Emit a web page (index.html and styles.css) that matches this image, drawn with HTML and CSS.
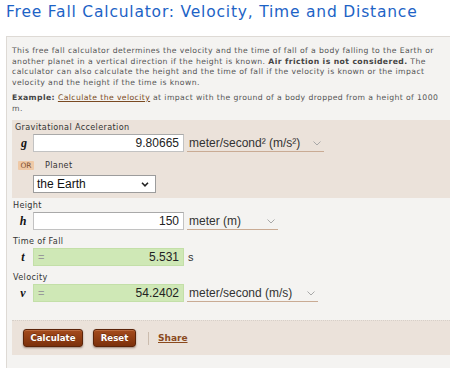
FILE: index.html
```html
<!DOCTYPE html>
<html lang="en">
<head>
<meta charset="utf-8">
<title>Free Fall Calculator</title>
<link rel="stylesheet" href="styles.css">
</head>
<body>
<h1 class="title">Free Fall Calculator: Velocity, Time and Distance</h1>
<div class="box">
  <p class="intro">This free fall calculator determines the velocity and the time of fall of a body falling to the Earth or another planet in a vertical direction if the height is known. <b>Air friction is not considered.</b> The calculator can also calculate the height and the time of fall if the velocity is known or the impact velocity and the height if the time is known.</p>
  <p class="intro example"><b>Example:</b> <a href="#">Calculate the velocity</a> at impact with the ground of a body dropped from a height of 1000 m.</p>

  <div class="panel">
    <div class="label">Gravitational Acceleration</div>
    <div class="row">
      <span class="var">g</span>
      <span class="field">9.80665</span>
      <span class="unit unit-g">meter/second² (m/s²)<svg class="chev" viewBox="0 0 8 5" width="8" height="5"><path d="M0.5 0.5 L4 4 L7.5 0.5" fill="none" stroke="#a8a8a8" stroke-width="1"/></svg></span>
    </div>
    <div class="or-row">
      <span class="or">OR</span>
      <span class="planet-label">Planet</span>
    </div>
    <div class="row">
      <span class="var"></span>
      <span class="planet">the Earth<svg class="chev-dark" viewBox="0 0 8 5" width="8" height="5"><path d="M1 0.8 L4 3.8 L7 0.8" fill="none" stroke="#222" stroke-width="1.6"/></svg></span>
    </div>
  </div>

  <div class="group">
    <div class="label">Height</div>
    <div class="row">
      <span class="var">h</span>
      <span class="field">150</span>
      <span class="unit unit-h">meter (m)<svg class="chev" viewBox="0 0 8 5" width="8" height="5"><path d="M0.5 0.5 L4 4 L7.5 0.5" fill="none" stroke="#a8a8a8" stroke-width="1"/></svg></span>
    </div>
    <div class="label">Time of Fall</div>
    <div class="row">
      <span class="var">t</span>
      <span class="field result"><span class="eq">=</span>5.531</span>
      <span class="plain-unit">s</span>
    </div>
    <div class="label">Velocity</div>
    <div class="row">
      <span class="var">v</span>
      <span class="field result"><span class="eq">=</span>54.2402</span>
      <span class="unit unit-v">meter/second (m/s)<svg class="chev" viewBox="0 0 8 5" width="8" height="5"><path d="M0.5 0.5 L4 4 L7.5 0.5" fill="none" stroke="#a8a8a8" stroke-width="1"/></svg></span>
    </div>
  </div>

  <div class="actions">
    <button class="btn btn-calc">Calculate</button>
    <button class="btn btn-reset">Reset</button>
    <span class="sep"></span>
    <a class="share" href="#">Share</a>
  </div>
</div>
</body>
</html>
```
FILE: styles.css
```css
html, body {
  margin: 0;
  padding: 0;
  background: #fff;
  overflow: hidden;
}
body {
  width: 450px;
  height: 368px;
  font-family: "DejaVu Sans", Verdana, sans-serif;
}
.title {
  margin: 0;
  padding: 1px 0 0 6px;
  height: 36px;
  box-sizing: border-box;
  font-size: 15.5px;
  letter-spacing: 0.8px;
  line-height: 22px;
  font-weight: normal;
  color: #1d63c6;
  white-space: nowrap;
}
.box {
  margin-left: 6px;
  margin-right: -20px;
  border: 1px solid #dedad5;
  border-right: none;
  background: #f4f3f1;
  padding: 9px 0 30px 5px;
}
.intro {
  margin: 0 30px 0 0;
  font-size: 7.7px;
  letter-spacing: 0.4px;
  line-height: 10.5px;
  color: #555;
}
.intro b { color: #444; }
.example {
  margin-top: 5px;
  margin-bottom: 6px;
}
.example a {
  color: #7a4a22;
  text-decoration: underline;
}
.panel {
  background: #ebe2da;
  padding: 2px 0 5px 3px;
}
.label {
  font-size: 8.1px;
  letter-spacing: 0.35px;
  line-height: 10px;
  color: #333;
  height: 10px;
}
.row {
  display: flex;
  align-items: center;
  margin-top: 2px;
  height: 18px;
}
.var {
  width: 20px;
  flex: none;
  text-align: center;
  font-family: "Liberation Serif", "Times New Roman", serif;
  font-weight: bold;
  font-style: italic;
  font-size: 12px;
  color: #111;
}
.panel .var { width: 18px; }
.field {
  box-sizing: border-box;
  width: 151px;
  height: 18px;
  flex: none;
  display: flex;
  align-items: center;
  justify-content: flex-end;
  padding: 0 4px;
  background: #fff;
  border: 1px solid #c2c2c2;
  border-top-color: #a9a9a9;
  font-family: "Liberation Sans", Arial, sans-serif;
  font-size: 12px;
  color: #222;
}
.field.result {
  background: #cfe8b6;
  border-color: #c3dfa8;
  justify-content: space-between;
}
.eq {
  color: #999;
  font-size: 11px;
}
.unit {
  box-sizing: border-box;
  margin-left: 3px;
  height: 18px;
  display: flex;
  align-items: center;
  justify-content: space-between;
  padding: 0 3px 0 2px;
  border-bottom: 1px solid #c9ab94;
  font-family: "Liberation Sans", Arial, sans-serif;
  font-size: 12px;
  color: #333;
}
.unit-g { width: 137px; }
.unit-h { width: 91px; }
.unit-v { width: 131px; }
.chev { flex: none; margin-top: 2px; }
.plain-unit {
  margin-left: 4px;
  font-family: "Liberation Sans", Arial, sans-serif;
  font-size: 11px;
  color: #333;
}
.or-row {
  display: flex;
  align-items: center;
  height: 12px;
  margin-top: 7px;
  padding-left: 3px;
}
.or {
  background: #efc9a6;
  color: #7f5030;
  font-size: 7.5px;
  line-height: 9px;
  padding: 0 1px;
  width: 16px;
  box-sizing: border-box;
  text-align: center;
  border-radius: 1px;
}
.planet-label {
  margin-left: 11px;
  font-size: 8.1px;
  letter-spacing: 0.35px;
  color: #333;
}
.panel .row + .or-row + .row { margin-top: 4px; }
.planet {
  box-sizing: border-box;
  width: 123px;
  height: 18px;
  display: flex;
  align-items: center;
  justify-content: space-between;
  padding: 0 6px 0 3px;
  background: #fff;
  border: 1px solid #9c9c9c;
  font-family: "Liberation Sans", Arial, sans-serif;
  font-size: 12px;
  color: #111;
}
.group {
  padding-top: 2px;
  padding-left: 1px;
}
.group .label { margin-top: 6px; }
.group .label:first-child { margin-top: 0; }
.actions {
  margin-top: 18px;
  border-top: 1px dotted #d6cfc8;
  background: #ebe2da;
  height: 35px;
  box-sizing: border-box;
  display: flex;
  align-items: center;
  padding-left: 11px;
}
.btn {
  font-family: "DejaVu Sans", Verdana, sans-serif;
  font-weight: bold;
  font-size: 8.6px;
  color: #fff;
  height: 18px;
  border: 1px solid #5b2409;
  border-radius: 3px;
  background: linear-gradient(#a54b1c, #7c300b);
  box-shadow: 0 1px 2px rgba(60, 20, 0, 0.45), inset 0 1px 0 rgba(255, 200, 160, 0.25);
  padding: 0;
  text-shadow: 0 -1px 0 rgba(0,0,0,0.3);
}
.btn-calc { width: 60px; }
.btn-reset { width: 43px; margin-left: 10px; }
.sep {
  width: 1px;
  height: 13px;
  background: #cbbcae;
  margin-left: 12px;
}
.share {
  margin-left: 9px;
  font-family: "DejaVu Sans", Verdana, sans-serif;
  font-weight: bold;
  font-size: 9px;
  color: #8a4a1e;
  text-decoration: underline;
}
```
